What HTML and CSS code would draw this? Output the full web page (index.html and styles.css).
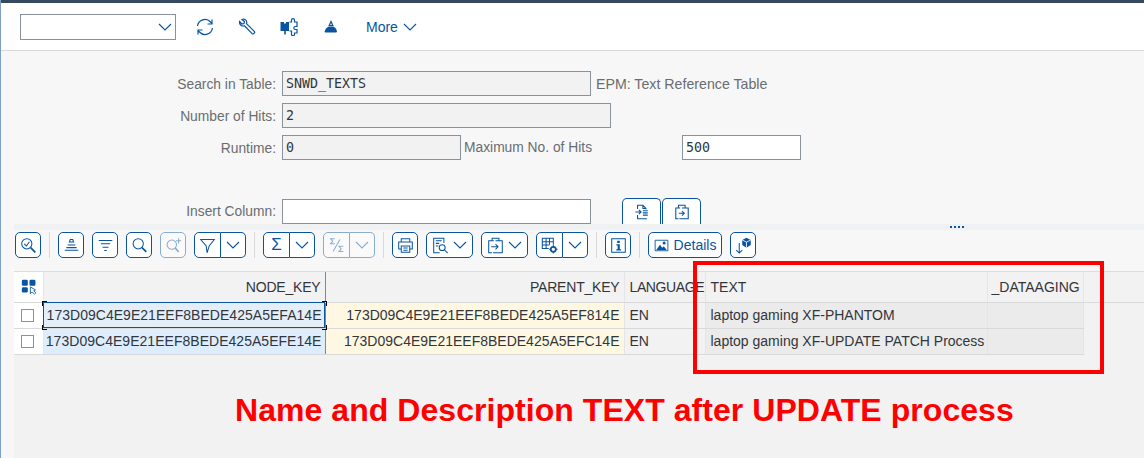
FILE: index.html
```html
<!DOCTYPE html>
<html lang="en">
<head>
    <meta charset="UTF-8">
    <title>Data Browser: SNWD_TEXTS</title>
    <link rel="stylesheet" href="styles.css">
</head>
<body>
    <header class="shell-bar"></header>
    <nav class="top-toolbar">
        <div class="combo">
            <svg class="chev" width="14" height="8" viewBox="0 0 14 8"><path d="M1 1l6 6 6-6"/></svg>
        </div>
        <button class="top-icon"><svg width="18" height="18" viewBox="0 0 18 18"><path class="ln" d="M1.500 8a7.500 7.500 0 0 1 13-4l1 1M16.500 10a7.500 7.500 0 0 1-13 4l-1-1M16 1.500V6h-4.500M2 16.500V12h4.500"/></svg></button>
        <button class="top-icon"><svg width="18" height="18" viewBox="0 0 18 18"><path class="ln" d="M1.500 3.500L4 6l2-.5.500-2L4 1.500C6 .5 8.500 1.500 8.800 4c0 .7-.1 1.200-.3 1.700l8 8c.8.8-1.300 2.900-2.100 2.100l-8-8C4 8.500 1 7 1.500 3.500z"/></svg></button>
        <button class="top-icon"><svg width="18" height="18" viewBox="0 0 18 18"><path class="fl" d="M.5 4H4v1.500h2V4h3v9H5.800v3.500H4.200V13H.5z"/><path class="ln" d="M9.500 4h2V2.200a1.500 1.500 0 0 1 3 0V4h2.500v4.500h-1.700a1.300 1.300 0 0 0 0 3H17V15h-2.500v1.200a1.500 1.500 0 0 1-3 0V13h-2"/></svg></button>
        <button class="top-icon"><svg width="18" height="18" viewBox="0 0 18 18"><path class="ln" d="M9 3.500L7.200 7.500h3.600z"/><path class="fl" d="M6.800 8.500h4.400c1.800.8 3.300 2.500 3.800 5 0 .8-.7 1-1.500 1h-9.500c-.8 0-1.500-.2-1.500-1C3.500 11 5 9.300 6.800 8.500z"/></svg></button>
        <button class="more">More <svg class="chev" width="14" height="8" viewBox="0 0 14 8"><path d="M1 1l6 6 6-6"/></svg></button>
    </nav>

    <main class="content">
        <section class="selection">
            <div class="row">
                <label class="lbl">Search in Table:</label>
                <span class="field ro w-table">SNWD_TEXTS</span>
                <span class="desc epm">EPM: Text Reference Table</span>
            </div>
            <div class="row">
                <label class="lbl">Number of Hits:</label>
                <span class="field ro w-hits">2</span>
            </div>
            <div class="row">
                <label class="lbl">Runtime:</label>
                <span class="field ro w-runtime">0</span>
                <span class="desc max-lbl">Maximum No. of Hits</span>
                <span class="field w-max">500</span>
            </div>
            <div class="row insert-row">
                <label class="lbl">Insert Column:</label>
                <span class="field w-table"></span>
                <div class="tab-btns">
                    <button class="tab-btn"><svg width="18" height="18" viewBox="0 0 18 18"><path class="ln" d="M4 5.500V1.500h6l3.500 3.500v1M10 1.500V5h3.500M4 12.500v4h10.500M1.500 9H8M5.500 6.500L8 9l-2.500 2.500M10 7.500h5.500M10 10h5.500M10 12.500h5.500"/></svg></button>
                    <button class="tab-btn"><svg width="18" height="18" viewBox="0 0 18 18"><path class="ln" d="M5 4V1.500h7.500V4M7 4.500H2v12h3M9 4.500h7v12H6M5.500 10.500h6M9 8l2.500 2.500L9 13"/></svg></button>
                </div>
            </div>
            <div class="splitter-dots"></div>
        </section>

        <section class="alv">
            <div class="alv-toolbar">
                <button class="btn"><svg width="20" height="20" viewBox="0 0 20 20"><circle class="ln" cx="8" cy="8" r="6"/><path class="ln" d="M5 8l2.500 2.500L11 5.500"/><path class="ln thick" d="M12.500 12.500L18 18"/></svg></button>
                <span class="sep"></span>
                <button class="btn"><svg width="20" height="20" viewBox="0 0 20 20"><path class="ln" d="M8.500 3l-1 3h5l-1-3zM5.500 9.500h9M4 12.500h12M2 15.500h16"/></svg></button>
                <button class="btn"><svg width="20" height="20" viewBox="0 0 20 20"><path class="ln" d="M2 4h16M4.500 8h11M6.500 12h7M8.500 16h3"/></svg></button>
                <button class="btn"><svg width="20" height="20" viewBox="0 0 20 20"><circle class="ln" cx="8.500" cy="8" r="6"/><path class="ln thick" d="M13 12.500L18 17.500"/></svg></button>
                <button class="btn off"><svg width="20" height="20" viewBox="0 0 20 20"><circle class="ln" cx="8" cy="9" r="5.500"/><path class="ln thick" d="M12 13l4 4.500"/><path class="ln" d="M16 1.500v6M13 4.500h6"/></svg></button>
                <div class="split">
                    <button class="btn"><svg width="20" height="20" viewBox="0 0 20 20"><path class="ln" d="M2 3h16l-6 7.500-2.500 8-1-8z"/></svg></button>
                    <button class="btn drop"><svg class="chev" width="14" height="8" viewBox="0 0 14 8"><path d="M1 1l6 6 6-6"/></svg></button>
                </div>
                <span class="sep"></span>
                <div class="split">
                    <button class="btn sigma">&Sigma;</button>
                    <button class="btn drop"><svg class="chev" width="14" height="8" viewBox="0 0 14 8"><path d="M1 1l6 6 6-6"/></svg></button>
                </div>
                <div class="split off">
                    <button class="btn"><svg width="20" height="20" viewBox="0 0 20 20"><path class="ln" d="M8 2H3l2.500 3L3 8h5M18 11h-5l2.500 3-2.500 3h5M14 3L6 17"/></svg></button>
                    <button class="btn drop"><svg class="chev" width="14" height="8" viewBox="0 0 14 8"><path d="M1 1l6 6 6-6"/></svg></button>
                </div>
                <span class="sep"></span>
                <button class="btn"><svg width="20" height="20" viewBox="0 0 20 20"><path class="ln" d="M5 6V2h10v4M5 14H2V6h16v8h-3"/><path class="ln" d="M5 10.500h10V18H5zM7.500 13h5M7.500 15.500h5"/></svg></button>
                <button class="btn wide"><svg width="20" height="20" viewBox="0 0 20 20"><path class="ln" d="M14 7V1.500H2v17h7M4.500 4.500h7M4.500 7.500h4M4.500 10.500h3"/><circle class="ln" cx="12" cy="12.500" r="3.500"/><path class="ln" d="M14.500 15L18.500 19"/></svg><svg class="chev" width="14" height="8" viewBox="0 0 14 8"><path d="M1 1l6 6 6-6"/></svg></button>
                <button class="btn wide"><svg width="20" height="20" viewBox="0 0 20 20"><path class="ln" d="M6 4.500V1.500h8v3M8 4.500H2v14h4M10 4.500h8v14H7M5 11.500h8M10 8.500l3 3-3 3"/></svg><svg class="chev" width="14" height="8" viewBox="0 0 14 8"><path d="M1 1l6 6 6-6"/></svg></button>
                <div class="split">
                    <button class="btn"><svg width="20" height="20" viewBox="0 0 20 20"><path class="ln" d="M9 13.500H1.500V1.500h13V9M1.500 5.500h13M1.500 9.500H10M6 1.500v12M10 1.500V9"/><circle class="ln thick" cx="14.500" cy="14.500" r="3"/><path class="ln" d="M14.500 9.500v2M14.500 17.500v2M9.500 14.500h2M17.500 14.500h2"/></svg></button>
                    <button class="btn drop"><svg class="chev" width="14" height="8" viewBox="0 0 14 8"><path d="M1 1l6 6 6-6"/></svg></button>
                </div>
                <span class="sep"></span>
                <button class="btn"><svg width="20" height="20" viewBox="0 0 20 20"><path class="ln" d="M2 2h16v16H2z"/><path class="fl" d="M8.500 4.500h3v2.500h-3zM7.500 8.500h4v6h1.500v1.500H7.500v-1.500H9V10H7.500z"/></svg></button>
                <span class="sep"></span>
                <button class="btn details"><svg width="20" height="20" viewBox="0 0 20 20"><path class="ln" d="M1.500 3h17v14h-17z"/><path class="fl" d="M3 16l5-7 3 4 2-2 4 5z"/><circle class="fl" cx="13.500" cy="6.500" r="2"/></svg>Details</button>
                <button class="btn"><svg width="20" height="20" viewBox="0 0 20 20"><path class="ln" d="M5 7v12M1.500 15.500L5 19l3.500-3.500"/><path class="fl" d="M13.500 1l5 2.500v6l-5 3-5-3v-6z"/><path class="wh" d="M8.500 3.500l5 2.500 5-2.500M13.500 6v6.500"/></svg></button>
            </div>

            <div class="grid-wrap">
                <table class="grid">
                    <thead>
                        <tr>
                            <th class="c-sel"><svg width="20" height="20" viewBox="0 0 20 20"><rect class="fl" x="1" y="2" width="7" height="7" rx="1.500"/><rect class="fl" x="10" y="2" width="7" height="7" rx="1.500"/><rect class="fl" x="1" y="11" width="7" height="6" rx="1.500"/><path class="cur" d="M11 10.500v8l2-2 3 2.500 1.500-1.500-2.500-2.500 2-1z"/></svg></th>
                            <th class="c-node r strong-edge tight">NODE_KEY</th>
                            <th class="c-parent r tight">PARENT_KEY</th>
                            <th class="c-lang tighter">LANGUAGE</th>
                            <th class="c-text">TEXT</th>
                            <th class="c-aging">_DATAAGING</th>
                            <th class="c-fill"></th>
                        </tr>
                    </thead>
                    <tbody>
                        <tr>
                            <td class="c-sel"><span class="check"></span></td>
                            <td class="c-node r key focus strong-edge">173D09C4E9E21EEF8BEDE425A5EFA14E<i class="tick tl"></i><i class="tick tr"></i><i class="tick bl"></i><i class="tick br"></i></td>
                            <td class="c-parent r parent">173D09C4E9E21EEF8BEDE425A5EF814E</td>
                            <td class="c-lang">EN</td>
                            <td class="c-text grey">laptop gaming XF-PHANTOM</td>
                            <td class="c-aging grey"></td>
                            <td class="c-fill"></td>
                        </tr>
                        <tr>
                            <td class="c-sel"><span class="check"></span></td>
                            <td class="c-node r key strong-edge">173D09C4E9E21EEF8BEDE425A5EFE14E</td>
                            <td class="c-parent r parent">173D09C4E9E21EEF8BEDE425A5EFC14E</td>
                            <td class="c-lang">EN</td>
                            <td class="c-text grey">laptop gaming XF-UPDATE PATCH Process</td>
                            <td class="c-aging grey"></td>
                            <td class="c-fill"></td>
                        </tr>
                    </tbody>
                </table>
            </div>
        </section>
    </main>

    <div class="red-box"></div>
    <div class="red-note">Name and Description TEXT after UPDATE process</div>
</body>
</html>
```

FILE: styles.css
```css
* {
    box-sizing: border-box;
}
body {
    margin: 0;
    height: 458px;
    overflow: hidden;
    font-family: 'Liberation Sans', Arial, sans-serif;
    font-size: 14px;
    color: #32363a;
    background-color: #f7f7f7;
    border-left: 1px solid #7d9fc4;
    display: flex;
    flex-direction: column;
}
button {
    font-family: inherit;
    padding: 0;
    margin: 0;
    background: none;
    border: none;
    color: #0854a0;
}
svg {
    display: block;
    flex: none;
}
.ln {
    fill: none;
    stroke: #0854a0;
    stroke-width: 1.2;
}
.ln.thick {
    stroke-width: 2;
}
.fl {
    fill: #0854a0;
}
.wh {
    fill: none;
    stroke: #fff;
    stroke-width: 1;
}
.cur {
    fill: #fff;
    stroke: #0854a0;
    stroke-width: 1;
}
.chev path {
    fill: none;
    stroke: #0854a0;
    stroke-width: 1.1;
}
.shell-bar {
    height: 3px;
    margin-left: -1px;
    background-color: #354a5f;
    flex: none;
}
.top-toolbar {
    height: 48px;
    flex: none;
    background-color: #fff;
    border-bottom: 1px solid #d9d9d9;
    padding-left: 19px;
    display: flex;
    align-items: center;
}
.combo {
    width: 156px;
    height: 26px;
    margin-right: 20px;
    border: 1px solid #89919a;
    display: flex;
    align-items: center;
    justify-content: flex-end;
    padding-right: 3px;
}
.top-icon {
    width: 18px;
    height: 18px;
    margin-right: 24px;
}
.more {
    display: flex;
    align-items: center;
    gap: 5px;
    font-size: 14px;
    margin-left: 2px;
}
.content {
    flex: 1;
    display: flex;
    flex-direction: column;
}
.selection {
    position: relative;
    height: 173px;
    flex: none;
    padding-top: 20px;
    color: #6a6d70;
}
.row {
    display: flex;
    align-items: center;
    height: 25px;
    margin-bottom: 7px;
}
.lbl {
    width: 275px;
    text-align: right;
    margin-right: 6px;
    padding-top: 1px;
    font-size: 13.800px;
}
.field {
    height: 25px;
    border: 1px solid #89919a;
    background-color: #fff;
    font-family: 'DejaVu Sans Mono', monospace;
    font-size: 13.300px;
    line-height: 23px;
    padding-left: 3px;
    color: #32363a;
}
.field.ro {
    background-color: #f2f2f2;
}
.w-table {
    width: 309px;
}
.w-hits {
    width: 329px;
}
.w-runtime {
    width: 179px;
}
.w-max {
    width: 119px;
}
.desc {
    margin-left: 5px;
}
.epm {
    font-size: 14.200px;
}
.max-lbl {
    width: 218px;
    margin-left: 3px;
    font-size: 13.800px;
}
.insert-row {
    height: 26px;
    align-items: flex-end;
    margin: 38px 0 0;
}
.insert-row .lbl {
    line-height: 25px;
}
.tab-btns {
    display: flex;
    margin-left: 31px;
    gap: 1px;
}
.tab-btn {
    width: 39px;
    height: 26px;
    background-color: #fff;
    border: 1px solid #0854a0;
    border-bottom: none;
    border-radius: 5px 5px 0 0;
    display: flex;
    align-items: center;
    justify-content: center;
}
.tab-btn svg {
    width: 16px;
    height: 16px;
}
.splitter-dots {
    position: absolute;
    left: 949px;
    top: 175px;
    width: 14px;
    height: 2px;
    background: repeating-linear-gradient(90deg, #0854a0 0 2px, transparent 2px 4px);
}
.alv {
    flex: 1;
    margin-left: 13px;
    background-color: #f2f2f2;
    border-top: 6px solid #eff1f3;
}
.alv-toolbar {
    height: 41px;
    margin-right: -1px;
    background-color: #f7f7f7;
    padding: 2px 0 0 1px;
    display: flex;
    align-items: flex-start;
    gap: 8px;
}
.btn {
    height: 26px;
    width: 26px;
    background-color: #fff;
    border: 1px solid #0854a0;
    border-radius: 5px;
    display: flex;
    align-items: center;
    justify-content: center;
}
.btn.off {
    opacity: 0.45;
}
.btn.wide {
    width: 47px;
    gap: 4px;
}
.btn.details {
    width: 74px;
    gap: 5px;
    font-size: 14px;
}
.btn svg {
    width: 17px;
    height: 17px;
}
.btn.details svg {
    width: 15px;
    height: 15px;
}
.btn .chev {
    width: 14px;
    height: 8px;
}
.split {
    display: flex;
}
.split .btn {
    width: 27px;
    border-radius: 5px 0 0 5px;
}
.split .drop {
    width: 25px;
    border-left: none;
    border-radius: 0 5px 5px 0;
}
.split.off {
    opacity: 0.45;
}
.sigma {
    font-size: 17px;
}
.sep {
    width: 1px;
    height: 26px;
    background-color: #d9d9d9;
}
.grid-wrap {
    border-top: 1px solid #dcdcdc;
}
.grid {
    border-collapse: collapse;
    table-layout: fixed;
    width: 1130px;
    font-size: 14px;
}
.grid th {
    height: 30px;
    background-color: #f2f2f2;
    font-weight: normal;
    text-align: left;
    color: #32363a;
    padding: 0 4px;
    border-right: 1px solid #e5e5e5;
    border-bottom: 1px solid #d9d9d9;
    white-space: nowrap;
    overflow: hidden;
}
.grid td {
    height: 26px;
    padding: 0 4px;
    border-right: 1px solid #e5e5e5;
    border-bottom: 1px solid #d9d9d9;
    white-space: nowrap;
}
.grid .c-sel {
    width: 29px;
    padding: 0;
    background-color: #fff;
    text-align: center;
}
.grid th.c-sel svg {
    width: 17px;
    height: 17px;
    margin-left: 7px;
}
.c-node {
    width: 282px;
}
.c-parent {
    width: 299px;
}
.c-lang {
    width: 81px;
}
.c-text {
    width: 282px;
}
.c-aging {
    width: 96px;
}
.grid th.c-fill {
    border-right: none;
}
.grid td.c-fill {
    border: none;
}
.grid .r {
    text-align: right;
}
.grid .strong-edge {
    border-right: 1px solid #85888b;
}
.grid .key {
    background-color: #deedfd;
    letter-spacing: 0.03px;
    padding: 0 3px 0 0;
}
.grid .focus {
    background-color: #e4eef9;
}
.grid .parent {
    background-color: #fef8e2;
}
.grid .grey {
    background-color: #ebebeb;
}
.grid .c-lang {
    background-color: #f2f2f2;
    padding-left: 5px;
    padding-right: 0;
}
.grid .c-text {
    padding-left: 5px;
    padding-right: 0;
}
.grid th.tight {
    letter-spacing: -0.2px;
}
.grid th.tighter {
    letter-spacing: -0.4px;
}
.check {
    display: block;
    width: 13px;
    height: 13px;
    margin-left: 7px;
    background-color: #fff;
    border: 1px solid #89919a;
}
.focus {
    position: relative;
    outline: 1px solid #0854a0;
    outline-offset: -1px;
}
.tick {
    position: absolute;
    width: 5px;
    height: 5px;
    border: 0 solid #000;
}
.tl {
    left: -2px;
    top: -2px;
    border-width: 1px 0 0 1px;
}
.tr {
    right: -2px;
    top: -2px;
    border-width: 1px 1px 0 0;
}
.bl {
    left: -2px;
    bottom: -2px;
    border-width: 0 0 1px 1px;
}
.br {
    right: -2px;
    bottom: -2px;
    border-width: 0 1px 1px 0;
}
.red-box {
    position: absolute;
    left: 693px;
    top: 261px;
    width: 411px;
    height: 113px;
    border: 4px solid #ff0000;
}
.red-note {
    position: absolute;
    left: 235px;
    top: 390px;
    font-size: 32px;
    font-weight: bold;
    line-height: 40px;
    letter-spacing: 0.05px;
    color: #ff0000;
    white-space: nowrap;
}
```
